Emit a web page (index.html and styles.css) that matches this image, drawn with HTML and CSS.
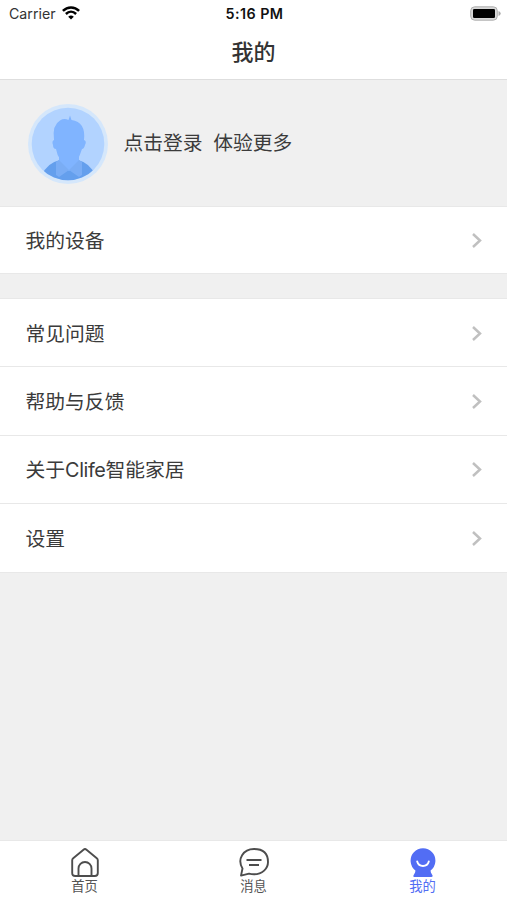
FILE: index.html
```html
<!DOCTYPE html>
<html lang="zh-CN">
<head>
<meta charset="utf-8">
<title>我的</title>
<link rel="stylesheet" href="styles.css">
</head>
<body>
<div class="app">
  <header class="header">
    <div class="status">
      <div class="carrier"><span>Carrier</span>
        <svg class="wifi" width="18" height="14" viewBox="0 0 18 14" fill="none" stroke="#000" stroke-width="2.5"><path d="M.9 4.9C5.5.3 12.5.3 17.1 4.9M3.9 8C6.9 5.1 11.1 5.1 14.1 8"/><path d="M9 13.6 6.2 10.7Q9 8.4 11.8 10.7Z" fill="#000" stroke="none"/></svg>
      </div>
      <time class="time">5:16 PM</time>
      <svg class="battery" width="32" height="15" viewBox="0 0 32 15"><rect x=".7" y=".8" width="26.6" height="13.4" rx="4" fill="#d8d8d8" stroke="#b0b0b0" stroke-width="1"/><rect x="3" y="3" width="22" height="9" rx="1.3" fill="#000"/><path d="M28.5 5q2.2.7 2.2 2.5t-2.2 2.5Z" fill="#aaa"/></svg>
    </div>
    <h1 class="title">我的</h1>
  </header>
  <section class="profile">
    <svg class="avatar" width="80" height="82" viewBox="0 0 80 82">
      <defs><clipPath id="disc"><circle cx="40" cy="41" r="36.3"/></clipPath></defs>
      <circle cx="40" cy="41" r="40" fill="#d5e7fb"/>
      <circle cx="40" cy="41" r="36.3" fill="#b2d3ff"/>
      <g clip-path="url(#disc)">
        <path d="M14 82V72Q19 60 32 57H50Q62 60 67 72V82Z" fill="#649fed"/>
        <path d="M31 53H51V61L41 68 31 61Z" fill="#80b4ff"/>
        <path d="M31 57 41 67 31 74 28 72V59ZM51 57 41 67 51 74 54 72V59Z" fill="#7aadf5"/>
        <path d="M26 37Q24 22 32 17.5Q36 15 40.5 17L42 12.5 43.5 17Q58 19 56 37Q59 38 57 42Q56 46 54 46Q52 52 50 56L44 62Q41 64 38 62L32 56Q29 52 28 46Q25 46 25 42Q23.5 38 26 37Z" fill="#80b4ff"/>
      </g>
    </svg>
    <div class="login"><span>点击登录</span><span>体验更多</span></div>
  </section>
  <main>
    <nav class="group devices">
      <div class="row"><span>我的设备</span><svg class="chevron" viewBox="0 0 11 16"><path d="m2 2 7 6.5-7 6.5"/></svg></div>
    </nav>
    <nav class="group">
      <div class="row"><span>常见问题</span><svg class="chevron" viewBox="0 0 11 16"><path d="m2 2 7 6.5-7 6.5"/></svg></div>
      <div class="row"><span>帮助与反馈</span><svg class="chevron" viewBox="0 0 11 16"><path d="m2 2 7 6.5-7 6.5"/></svg></div>
      <div class="row"><span>关于<span class="latin">Clife</span>智能家居</span><svg class="chevron" viewBox="0 0 11 16"><path d="m2 2 7 6.5-7 6.5"/></svg></div>
      <div class="row"><span>设置</span><svg class="chevron" viewBox="0 0 11 16"><path d="m2 2 7 6.5-7 6.5"/></svg></div>
    </nav>
  </main>
  <footer class="tabs">
    <div class="tab"><svg width="32" height="32" viewBox="0 0 32 32"><path d="M3.2 13.2Q3.2 12 4.2 11.2L14.5 2.7Q16 1.5 17.5 2.7L27.8 11.2Q28.8 12 28.8 13.2V26Q28.8 29 25.8 29H6.2Q3.2 29 3.2 26Z"/><path d="M9.5 29V21.5a6.5 6.5 0 0 1 13 0V29"/></svg><span>首页</span></div>
    <div class="tab"><svg width="32" height="32" viewBox="0 0 32 32"><path d="M4.5 21.5C-1.2 12 5.3 2 16 2S30 8.3 30 15 24.3 27.3 16 27.3Q13.5 27.3 11 26.6L3 28.6Z"/><path d="M8.5 13H23.5M11 18H21"/></svg><span>消息</span></div>
    <div class="tab active"><svg width="32" height="32" viewBox="0 0 32 32"><path d="M8.4 23.4A12.4 12.4 0 1 1 23.6 23.4Q23.4 25.3 25 27.6T24.2 30H7.8Q5.4 30 7 27.6 8.6 25.3 8.4 23.4Z" fill="#526df4" stroke="none"/><path d="M10.2 14.5Q11.5 19 16 19T21.8 14.5" stroke="#fff" stroke-linecap="round"/></svg><span>我的</span></div>
  </footer>
</div>
</body>
</html>
```
FILE: styles.css
```css
* { box-sizing: border-box; }
body {
  margin: 0;
  background: #f0f0f0;
  color: #3b3b3b;
  font-family: Inter, "Noto Sans CJK SC", sans-serif;
}
.app { height: 900px; display: flex; flex-direction: column; }
.header { height: 80px; background: #fff; border-bottom: 1.5px solid #dedede; flex: none; }
.status {
  height: 28px;
  padding: 0 5px 0 9px;
  display: grid;
  grid-template-columns: 1fr auto 1fr;
  align-items: center;
  color: #111;
}
.carrier { display: flex; align-items: center; gap: 6px; font-size: 14.2px; line-height: 17px; margin-top: -1px; color: #333; }
.wifi { margin-top: -1px; }
.time { font-size: 14.3px; font-weight: 600; letter-spacing: .45px; margin: -2px 2px 0 0; }
.battery { justify-self: end; margin-top: -2px; }
.title { margin: 0; height: 48px; line-height: 48px; font-size: 22px; font-weight: 500; text-align: center; color: #333; }
.profile {
  height: 127px;
  flex: none;
  padding: 1px 0 0 28px;
  display: flex;
  align-items: center;
  gap: 15.5px;
  border-bottom: 1px solid #e8e8e8;
}
.login { display: flex; gap: 10.5px; margin-top: -1px; font-size: 19.8px; line-height: 28px; }
.group { background: #fff; }
.devices { margin-bottom: 24px; }
.devices + .group { border-top: 1px solid #e8e8e8; }
.row {
  height: 68.4px;
  padding: 0 25px 0 25.5px;
  display: flex;
  align-items: center;
  justify-content: space-between;
  font-size: 19.8px;
  line-height: 28px;
  border-bottom: 1px solid #e8e8e8;
}
.row > span { margin-top: 2px; }
.latin { letter-spacing: -.4px; }
.devices .row { height: 67px; }
.chevron { width: 11px; height: 16px; fill: none; stroke: #c0c0c0; stroke-width: 2.5; }
.tabs { height: 60px; margin-top: auto; padding-top: 6px; display: flex; background: #fff; border-top: 1px solid #e8e8e8; }
.tab { flex: 1; display: flex; flex-direction: column; align-items: center; font-size: 13.3px; line-height: 15px; color: #555; }
.tab svg { fill: none; stroke: #4d4d4d; stroke-width: 1.9; stroke-linejoin: round; }
.tab.active { color: #526df4; }
```
